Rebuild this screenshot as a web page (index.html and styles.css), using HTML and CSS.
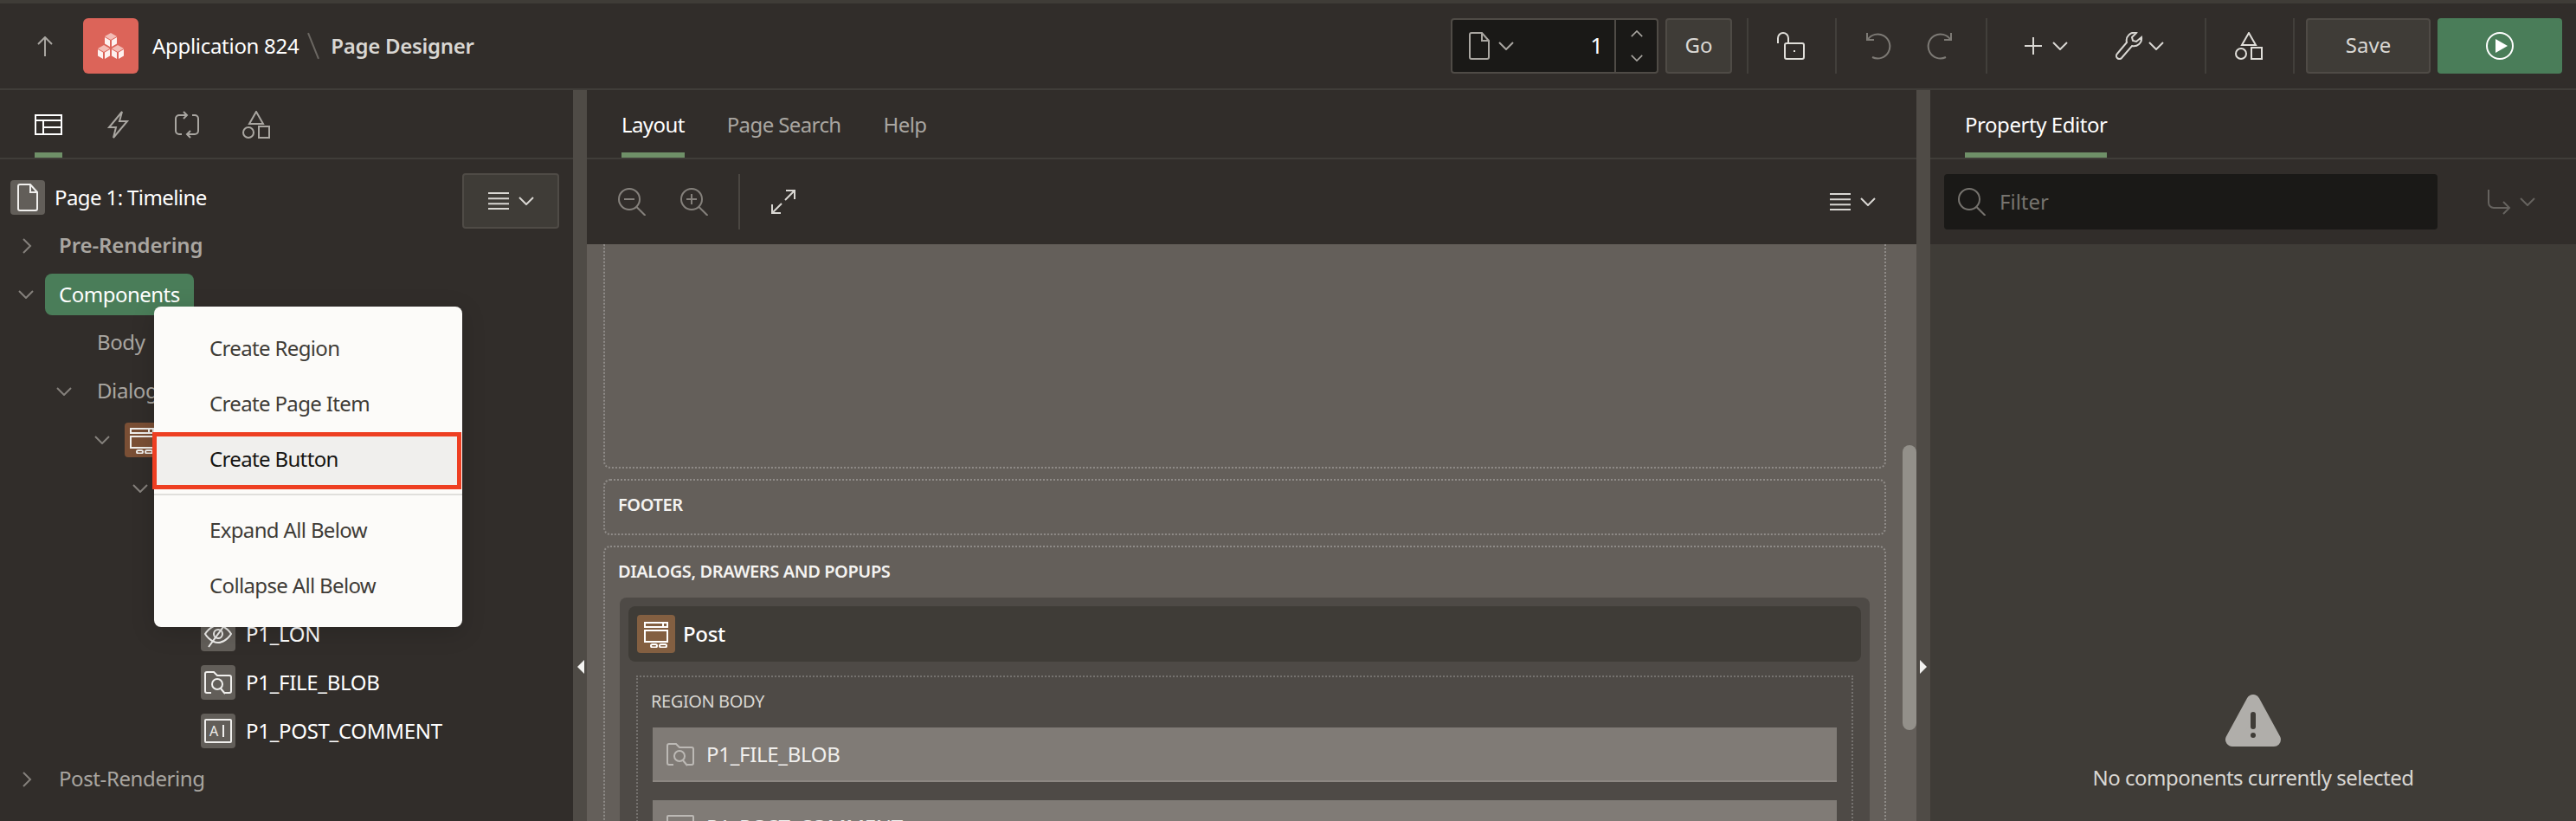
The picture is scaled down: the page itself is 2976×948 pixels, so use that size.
FILE: index.html
```html
<!DOCTYPE html>
<html lang="en">
<head>
    <meta charset="UTF-8">
    <title>Page Designer</title>
    <link rel="stylesheet" href="styles.css">
</head>
<body>

    <svg class="icon-defs" width="0" height="0">
        <symbol id="chev-d" viewBox="0 0 18 10"><path d="M1 1l8 8 8-8"/></symbol>
        <symbol id="chev-u" viewBox="0 0 18 10"><path d="M1 9l8-8 8 8"/></symbol>
        <symbol id="chev-r" viewBox="0 0 10 18"><path d="M1 1l8 8-8 8"/></symbol>
        <symbol id="bars" viewBox="0 0 24 20"><path d="M0 1h24M0 7.300h24M0 13.300h24M0 19h24"/></symbol>
        <symbol id="doc" viewBox="0 0 24 32"><path d="M1 3a2 2 0 0 1 2-2h12l8 9v19a2 2 0 0 1-2 2H3a2 2 0 0 1-2-2zM15 1v9h8"/></symbol>
        <symbol id="shapes" viewBox="0 0 32 32"><path d="M16 1l8 14H8z"/><circle cx="7" cy="25" r="6"/><rect x="19" y="18" width="12" height="13"/></symbol>
        <symbol id="dialog" viewBox="0 0 32 32"><path d="M3 3h26v5H3zM24 3v5M3 12h26v13H3z"/><rect x="10" y="28" width="7" height="3.500" rx="1.700"/><rect x="20" y="28" width="8" height="3.500" rx="1.700"/></symbol>
        <symbol id="folder" viewBox="0 0 32 32"><path d="M8 28H3a2 2 0 0 1-2-2V6a2 2 0 0 1 2-2h8l4 4h14a2 2 0 0 1 2 2v16a2 2 0 0 1-2 2h-5"/><circle cx="15" cy="18" r="6"/><path d="M19 23l5 6"/></symbol>
        <symbol id="zoom" viewBox="0 0 32 32"><circle cx="13" cy="13" r="12"/><path d="M21.500 22l10 10"/></symbol>
    </svg>

    <header class="topbar">
        <svg class="ico up-arrow" width="18" height="23" viewBox="0 0 18 23"><path d="M9 23V1M1 9l8-8 8 8"/></svg>
        <div class="app-logo">
            <svg width="32" height="32" viewBox="0 0 32 32">
                <path class="cube-top" d="M16 1l7 4-7 4-7-4zM8 15l7 4-7 4-7-4zM24 15l7 4-7 4-7-4z"/>
                <path class="cube-side" d="M9 6l6 3.500V17l-6-3.500zM23 6v7.500L17 17V9.500zM1 20l6 3.500V31l-6-3.500zM15 20v7.500L9 31v-7.500zM17 20l6 3.500V31l-6-3.500zM31 20v7.500L25 31v-7.500z"/>
            </svg>
        </div>
        <span class="crumb-app">Application 824</span>
        <span class="crumb-slash"></span>
        <span class="crumb-page">Page Designer</span>

        <div class="page-picker">
            <svg class="ico doc-ico" width="24" height="32"><use href="#doc"/></svg>
            <svg class="ico doc-chev" width="18" height="10"><use href="#chev-d"/></svg>
            <span class="page-num">1</span>
            <div class="spinner">
                <svg class="ico" width="14" height="8"><use href="#chev-u"/></svg>
                <svg class="ico" width="14" height="8"><use href="#chev-d"/></svg>
            </div>
        </div>
        <button class="btn go-btn">Go</button>

        <div class="tb-group tb-lock">
            <svg class="ico" width="32" height="32" viewBox="0 0 32 32"><path d="M1 13V7a6 6 0 0 1 12 0v6"/><rect x="9" y="13" width="22" height="18" rx="2"/><path d="M20 21v2"/></svg>
        </div>
        <div class="tb-group tb-undo">
            <svg class="ico" width="32" height="32" viewBox="0 0 32 32"><path d="M3 1v8h8M3.500 9A14 14 0 1 1 9 29"/></svg>
            <svg class="ico" width="32" height="32" viewBox="0 0 32 32"><path d="M29 1v8h-8M28.500 9A14 14 0 1 0 23 29"/></svg>
        </div>
        <div class="tb-group tb-add">
            <svg class="ico" width="20" height="20" viewBox="0 0 20 20"><path d="M10 0v20M0 10h20"/></svg>
            <svg class="ico add-chev" width="18" height="10"><use href="#chev-d"/></svg>
            <svg class="ico wrench" width="32" height="32" viewBox="0 0 32 32"><path d="M30 6l-6 5-4-1-1-4 5-5a9 9 0 0 0-11 11L2 25a3.500 3.500 0 0 0 5 5l12-14a9 9 0 0 0 11-10z"/></svg>
            <svg class="ico wrench-chev" width="18" height="10"><use href="#chev-d"/></svg>
        </div>
        <div class="tb-group tb-shapes">
            <svg class="ico" width="32" height="32"><use href="#shapes"/></svg>
        </div>
        <button class="btn save-btn">Save</button>
        <button class="btn run-btn">
            <svg width="32" height="32" viewBox="0 0 32 32"><circle class="run-ring" cx="16" cy="16" r="15"/><path class="run-tri" d="M11 8l14 8-14 8z"/></svg>
        </button>
    </header>

    <main class="main">
        <section class="left-col">
            <nav class="tabs icon-tabs">
                <div class="tab active">
                    <svg class="ico" width="32" height="32" viewBox="0 0 32 32"><rect x="1" y="5" width="30" height="22"/><path d="M1 11h30M10 11v16M10 19h21"/></svg>
                </div>
                <div class="tab"><svg class="ico" width="32" height="32" viewBox="0 0 32 32"><path d="M21 1L6 19h8l-3 12 16-19h-9z"/></svg></div>
                <div class="tab"><svg class="ico" width="32" height="32" viewBox="0 0 32 32"><path d="M16 5H7a4 4 0 0 0-4 4v14a4 4 0 0 0 4 4h3M12 1l4 4-4 4M16 27h9a4 4 0 0 0 4-4V9a4 4 0 0 0-4-4h-3M20 23l-4 4 4 4"/></svg></div>
                <div class="tab"><svg class="ico" width="32" height="32"><use href="#shapes"/></svg></div>
            </nav>

            <div class="tree-wrap">
                <button class="btn tree-menu-btn">
                    <svg class="ico" width="24" height="20"><use href="#bars"/></svg>
                    <svg class="ico" width="18" height="10"><use href="#chev-d"/></svg>
                </button>

                <div class="row page-row">
                    <span class="item-box"><svg class="ico" width="24" height="32"><use href="#doc"/></svg></span>
                    <span class="page-label">Page 1: Timeline</span>
                </div>
                <div class="row lvl0"><svg class="ico twist" width="12" height="18"><use href="#chev-r"/></svg><span class="node strong">Pre-Rendering</span></div>
                <div class="row lvl0"><svg class="ico twist" width="18" height="10"><use href="#chev-d"/></svg><span class="node selected">Components</span></div>
                <div class="row lvl1"><span class="node">Body</span></div>
                <div class="row lvl1"><svg class="ico twist" width="18" height="10"><use href="#chev-d"/></svg><span class="node">Dialogs, Drawers and Popups</span></div>
                <div class="row lvl2"><svg class="ico twist" width="18" height="10"><use href="#chev-d"/></svg><span class="item-box brown"><svg class="ico" width="32" height="32"><use href="#dialog"/></svg></span><span class="leaf">Post</span></div>
                <div class="row lvl3"><svg class="ico twist" width="18" height="10"><use href="#chev-d"/></svg><span class="node">Region Body</span></div>
                <div class="row lvl4"><span class="item-box"></span><span class="leaf">P1_POST_ID</span></div>
                <div class="row lvl4"><span class="item-box"></span><span class="leaf">P1_LAT</span></div>
                <div class="row lvl4">
                    <span class="item-box"><svg class="ico" width="32" height="32" viewBox="0 0 32 32"><path d="M1 16s6-10 15-10 15 10 15 10-6 10-15 10S1 16 1 16z"/><circle cx="16" cy="16" r="5"/><path d="M27 1L5 31"/></svg></span>
                    <span class="leaf">P1_LON</span>
                </div>
                <div class="row lvl4">
                    <span class="item-box"><svg class="ico" width="32" height="32"><use href="#folder"/></svg></span>
                    <span class="leaf">P1_FILE_BLOB</span>
                </div>
                <div class="row lvl4">
                    <span class="item-box"><svg class="ico" width="32" height="32" viewBox="0 0 32 32"><rect x="1" y="3" width="30" height="26" rx="1"/><text class="ai-text" x="6" y="22">A</text><path d="M22 9v14"/></svg></span>
                    <span class="leaf">P1_POST_COMMENT</span>
                </div>
                <div class="row lvl0"><svg class="ico twist" width="12" height="18"><use href="#chev-r"/></svg><span class="node">Post-Rendering</span></div>

                <div class="ctx-menu">
                    <div class="menu-item">Create Region</div>
                    <div class="menu-item">Create Page Item</div>
                    <div class="menu-item picked">Create Button</div>
                    <div class="menu-sep"></div>
                    <div class="menu-item">Expand All Below</div>
                    <div class="menu-item">Collapse All Below</div>
                </div>
            </div>
        </section>

        <div class="splitter"><span class="tri-left"></span></div>

        <section class="mid-col">
            <nav class="tabs text-tabs">
                <div class="tab active">Layout</div>
                <div class="tab">Page Search</div>
                <div class="tab">Help</div>
            </nav>
            <div class="mid-toolbar">
                <svg class="ico dim" width="32" height="32"><use href="#zoom"/><path d="M7 13h12"/></svg>
                <svg class="ico dim zoom-in" width="32" height="32"><use href="#zoom"/><path d="M7 13h12M13 7v12"/></svg>
                <span class="mid-sep"></span>
                <svg class="ico expand" width="28" height="28" viewBox="0 0 28 28"><path d="M16 12L27 1M17 1h10v10M12 16L1 27M1 17v10h10"/></svg>
                <span class="mid-menu">
                    <svg class="ico" width="24" height="20"><use href="#bars"/></svg>
                    <svg class="ico" width="18" height="10"><use href="#chev-d"/></svg>
                </span>
            </div>
            <div class="canvas">
                <div class="slot slot-open"></div>
                <div class="slot slot-footer"><h4>FOOTER</h4></div>
                <div class="slot slot-dialogs">
                    <h4>DIALOGS, DRAWERS AND POPUPS</h4>
                    <div class="dlg-card">
                        <div class="dlg-head">
                            <span class="dlg-icon"><svg class="ico" width="32" height="32"><use href="#dialog"/></svg></span>
                            <span>Post</span>
                        </div>
                        <div class="region-body">
                            <h5>REGION BODY</h5>
                            <div class="field">
                                <svg class="ico" width="32" height="32"><use href="#folder"/></svg>
                                <span>P1_FILE_BLOB</span>
                            </div>
                            <div class="field">
                                <svg class="ico" width="32" height="32" viewBox="0 0 32 32"><rect x="1" y="3" width="30" height="26" rx="1"/></svg>
                                <span>P1_POST_COMMENT</span>
                            </div>
                        </div>
                    </div>
                </div>
                <div class="scroll-thumb"></div>
            </div>
        </section>

        <div class="splitter"><span class="tri-right"></span></div>

        <section class="right-col">
            <nav class="tabs text-tabs prop-tabs">
                <div class="tab active">Property Editor</div>
            </nav>
            <div class="filter-row">
                <div class="filter-box">
                    <svg class="ico" width="32" height="32"><use href="#zoom"/></svg>
                    <span>Filter</span>
                </div>
                <svg class="ico ret-ico" width="28" height="30" viewBox="0 0 28 30"><path d="M2 1v15a6 6 0 0 0 6 6h18M19 15l7 7-7 7"/></svg>
                <svg class="ico ret-ico" width="18" height="10"><use href="#chev-d"/></svg>
            </div>
            <div class="empty">
                <svg width="64" height="60" viewBox="0 0 64 60">
                    <path class="warn-tri" d="M32 8L8 52h48z"/>
                    <rect class="warn-mark" x="29" y="20" width="6" height="20" rx="3"/>
                    <circle class="warn-mark" cx="32" cy="47" r="3"/>
                </svg>
                <p>No components currently selected</p>
            </div>
        </section>
    </main>

</body>
</html>
```

FILE: styles.css
```css
* { box-sizing: border-box; }
html, body { margin: 0; height: 948px; overflow: hidden; }
body { width: 2976px; background: #312d2a; color: #fff; font-family: "Noto Sans", "Open Sans", sans-serif; font-size: 24px; }
h4, h5, p { margin: 0; }
button { font: inherit; cursor: pointer; }

.icon-defs { position: absolute; }
.ico { fill: none; stroke: currentColor; stroke-width: 2; flex: none; display: block; }

/* top bar */
.topbar { display: flex; align-items: center; height: 104px; border-top: 4px solid #3f3c37; border-bottom: 2px solid #403d39; padding: 0 16px 0 43px; }
.up-arrow { color: #a9a6a1; }
.app-logo { width: 64px; height: 64px; margin-left: 35px; border-radius: 6px; background: #dc6459; display: flex; align-items: center; justify-content: center; }
.cube-top { fill: #f3bdb6; }
.cube-side { fill: #fdf1ef; }
.crumb-app { margin-left: 16px; letter-spacing: -0.3px; padding-bottom: 2px; }
.crumb-slash { width: 2px; height: 32px; margin: 0 19px 0 16px; background: #6b6762; transform: rotate(-22deg); }
.crumb-page { font-weight: 600; color: #d9d7d3; letter-spacing: -0.3px; padding-bottom: 2px; }

.page-picker { display: flex; align-items: center; width: 240px; height: 64px; margin-left: auto; background: #1a1917; border: 2px solid #4f4b46; border-radius: 4px; padding-left: 19px; }
.doc-ico { color: #a9a6a1; }
.doc-chev { margin-left: 10px; color: #a9a6a1; }
.page-num { margin-left: auto; padding: 0 13px 2px 0; font-size: 26px; }
.spinner { width: 49px; height: 60px; border-left: 2px solid #4f4b46; display: flex; flex-direction: column; align-items: center; justify-content: space-between; padding: 12px 0; color: #a9a6a1; }

.btn { height: 64px; border: 2px solid #4f4b46; border-radius: 4px; background: #3f3c37; color: #d9d7d3; padding: 0 0 3px; }
.go-btn { width: 77px; margin-left: 8px; margin-right: 17px; }
.save-btn { width: 144px; margin-left: 13px; }
.run-btn { width: 144px; margin-left: 8px; background: #4a7d59; border-color: #4a7d59; padding: 0; display: flex; align-items: center; justify-content: center; }
.run-ring { fill: none; stroke: #fff; stroke-width: 2; }
.run-tri { fill: #fff; }

.tb-group { display: flex; align-items: center; height: 64px; border-left: 2px solid #423f3b; color: #e0ded9; }
.tb-lock { padding: 0 35px 0 33px; }
.tb-undo { padding: 0 37px 0 32px; gap: 39px; color: #7d7a75; }
.tb-add { padding: 0 47px 0 43px; color: #d9d7d3; }
.add-chev { margin-left: 12px; }
.wrench { margin-left: 55px; }
.wrench-chev { margin-left: 6px; }
.tb-shapes { padding: 0 35px 0 33px; border-right: 2px solid #423f3b; }

/* three columns */
.main { display: flex; height: 844px; }
.left-col { width: 662px; flex: none; }
.mid-col { width: 1536px; flex: none; display: flex; flex-direction: column; }
.right-col { flex: 1; }
.splitter { width: 16px; flex: none; background: #4f4b46; padding-top: 658px; }
.tri-left { display: block; width: 0; margin-left: 5px; border-style: solid; border-width: 8px 8px 8px 0; border-color: transparent #f4f3f1 transparent transparent; }
.tri-right { display: block; width: 0; margin-left: 4px; border-style: solid; border-width: 8px 0 8px 8px; border-color: transparent transparent transparent #f4f3f1; }

.tabs { display: flex; height: 80px; border-bottom: 2px solid #403d39; gap: 49px; padding-left: 40px; letter-spacing: -0.6px; }
.icon-tabs { gap: 48px; }
.prop-tabs { letter-spacing: -0.45px; }
.tab { height: 78px; padding-top: 24px; line-height: 32px; color: #a9a6a1; }
.tab.active { color: #fff; border-bottom: 6px solid #6f9068; }

/* tree */
.tree-wrap { position: relative; padding-top: 16px; }
.tree-menu-btn { position: absolute; left: 534px; top: 16px; width: 112px; padding: 0; display: flex; align-items: center; justify-content: center; gap: 11px; }
.row { display: flex; align-items: center; height: 56px; color: #a9a6a1; }
.page-row { padding-left: 12px; }
.page-label { margin-left: 11px; padding-bottom: 2px; color: #fff; letter-spacing: -0.6px; }
.lvl0, .lvl1, .lvl2, .lvl3, .lvl4 { position: relative; }
.lvl0 { padding-left: 52px; }
.lvl1 { padding-left: 96px; }
.lvl2 { padding-left: 144px; }
.lvl3 { padding-left: 184px; }
.lvl4 { padding-left: 232px; }
.twist { position: absolute; color: #85817c; }
.lvl0 .twist { left: 25px; }
.lvl0 .twist[height="10"] { left: 21px; }
.lvl1 .twist { left: 65px; }
.lvl2 .twist { left: 109px; }
.lvl3 .twist { left: 153px; }
.node { height: 48px; line-height: 46px; padding: 0 16px; border-radius: 8px; letter-spacing: -0.4px; }
.node.strong { font-weight: 600; letter-spacing: -0.1px; }
.node.selected { background: #4a7d59; color: #fff; line-height: 48px; letter-spacing: -0.5px; }
.item-box { width: 40px; height: 40px; flex: none; border-radius: 4px; background: #625e59; color: #f0efed; display: flex; align-items: center; justify-content: center; }
.item-box.brown { background: #7a4f35; }
.leaf { margin-left: 12px; padding-bottom: 2px; color: #fff; letter-spacing: -0.3px; }

.ai-text { font-size: 16px; font-family: "Noto Sans", sans-serif; fill: currentColor; stroke: none; }

/* context menu */
.ctx-menu { position: absolute; left: 178px; top: 170px; width: 356px; height: 370px; padding-top: 17px; background: #fcfbf9; border-radius: 8px; box-shadow: 0 6px 28px rgba(0, 0, 0, 0.16); color: #3f3c37; }
.menu-item { height: 64px; line-height: 61px; padding-left: 64px; letter-spacing: -0.65px; }
.menu-item.picked { width: 357px; height: 66px; line-height: 52px; margin-left: -2px; padding-left: 61px; border: 5px solid #ee3f22; background: #f0efed; color: #161513; }
.menu-sep { height: 2px; margin: 5px 0 9px; background: #e0dfdc; }

/* layout canvas */
.mid-toolbar { display: flex; align-items: center; height: 98px; padding-left: 36px; color: #85817c; }
.zoom-in { margin-left: 40px; }
.mid-sep { width: 2px; height: 64px; margin-left: 35px; background: #4a4641; }
.mid-toolbar .expand { margin-left: 36px; color: #d9d7d3; }
.mid-menu { display: flex; align-items: center; gap: 11px; margin-left: auto; margin-right: 47px; color: #d9d7d3; }

.canvas { position: relative; flex: 1; overflow: hidden; background: #645f5a; padding: 0 35px 0 19px; display: flex; flex-direction: column; gap: 12px; }
.slot { border: 2px dotted rgba(255, 255, 255, 0.28); border-radius: 8px; flex: none; }
.slot-open { height: 259px; border-top: 0; border-radius: 0 0 8px 8px; }
.slot-footer { height: 65px; padding: 14px 15px 0; }
.slot-dialogs { height: 400px; padding: 14px 17px 0; }
.slot h4 { font-size: 20px; line-height: 28px; font-weight: 600; letter-spacing: -0.4px; color: #f4f3f1; }
.slot-dialogs h4 { margin-left: -2px; }

.dlg-card { margin-top: 16px; height: 340px; padding: 10px; border-radius: 8px 8px 0 0; background: #4e4a46; }
.dlg-head { display: flex; align-items: center; gap: 9px; height: 64px; padding-left: 10px; border-radius: 8px; background: #3f3c37; font-weight: 500; letter-spacing: -0.3px; }
.dlg-head span + span { padding-bottom: 2px; }
.dlg-icon { width: 44px; height: 44px; border-radius: 4px; background: #835f41; display: flex; align-items: center; justify-content: center; }
.region-body { margin: 16px 9px 0; height: 300px; padding: 14px 17px 0; border: 2px dotted rgba(255, 255, 255, 0.22); }
.region-body h5 { margin-left: -2px; font-size: 20px; line-height: 28px; font-weight: 400; color: #d9d7d3; letter-spacing: -0.4px; }
.field { display: flex; align-items: center; gap: 14px; height: 63px; margin: 0 0 21px; padding-left: 16px; background: #807b76; border-bottom: 2px solid #8c8782; color: #f0efed; letter-spacing: -0.3px; }
.field .ico { color: #bcb9b5; }
.region-body h5 + .field { margin-top: 16px; }
.scroll-thumb { position: absolute; left: 1520px; top: 232px; width: 16px; height: 329px; border-radius: 8px; background: #93908a; }

/* property editor */
.filter-row { display: flex; align-items: center; height: 98px; padding: 0 0 0 16px; }
.filter-box { display: flex; align-items: center; gap: 16px; width: 570px; height: 64px; padding: 0 0 0 16px; border-radius: 4px; background: #1a1917; color: #76736e; }
.filter-box span { padding-bottom: 2px; }
.ret-ico { color: #66635f; margin-left: 57px; }
.ret-ico + .ret-ico { margin-left: 10px; }
.empty { height: 666px; background: #3f3c37; padding-top: 520px; text-align: center; color: #d9d7d3; }
.empty svg { display: block; margin: 0 auto; }
.empty p { margin-top: 19px; line-height: 34px; letter-spacing: -0.5px; }
.warn-tri { fill: #b0aeaa; stroke: #b0aeaa; stroke-width: 16; stroke-linejoin: round; }
.warn-mark { fill: #3f3c37; }
```
